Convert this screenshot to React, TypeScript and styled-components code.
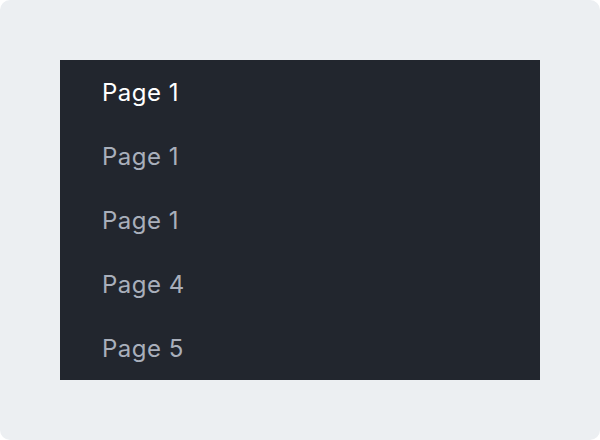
import React from "react";
import styled, { createGlobalStyle } from "styled-components";

const Global = createGlobalStyle`
  html, body { margin: 0; padding: 0; background: #ffffff; }
  * { box-sizing: border-box; }
`;

const Page = styled.div`
  width: 600px;
  height: 440px;
  background: #eceff2;
  border-radius: 10px;
  padding: 60px;
  display: flex;
`;

const Menu = styled.nav`
  width: 480px;
  height: 320px;
  background: #22262e;
  display: flex;
  flex-direction: column;
`;

const Item = styled.div<{ $active?: boolean }>`
  height: 64px;
  display: flex;
  align-items: center;
  padding-left: 42px;
  font-family: Inter, Lato, sans-serif;
  font-size: 24px;
  letter-spacing: 0.5px;
  color: ${(p) => (p.$active ? "#ffffff" : "#a9afbb")};
`;

const items = ["Page 1", "Page 1", "Page 1", "Page 4", "Page 5"];

export default function App() {
  return (
    <>
      <Global />
      <Page>
        <Menu>
          {items.map((t, i) => (
            <Item key={i} $active={i === 0}>
              {t}
            </Item>
          ))}
        </Menu>
      </Page>
    </>
  );
}
